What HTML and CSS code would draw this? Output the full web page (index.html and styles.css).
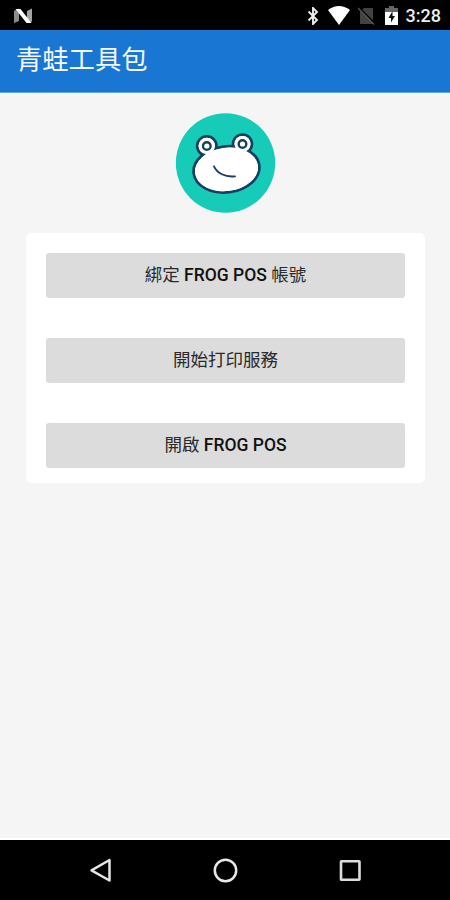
FILE: index.html
```html
<!DOCTYPE html>
<html lang="zh-Hant">
<head>
  <meta charset="UTF-8" />
  <meta name="viewport" content="width=device-width, initial-scale=1.0"/>
  <title>青蛙工具包</title>
  <link rel="stylesheet" href="styles.css">
</head>
<body>

  <!-- Status bar -->
  <div class="status-bar">
    <svg class="icon-n" width="20" height="18" viewBox="0 0 20 18">
      <path d="M1 4 L6 1.5 V14 L1 16Z" fill="#8c8c8c"/>
      <path d="M14 4 L19 1.5 V14.5 L14 16Z" fill="#a4a4a4"/>
      <path d="M2.5 2 H7.5 L18.5 16 H13.5Z" fill="#fff"/>
    </svg>
    <div class="status-icons">
      <svg class="icon-bt" width="12" height="18" viewBox="0 0 12 18">
        <path d="M1.5 4.5 L10 13 L6 17 V1 L10 5 L1.5 13.5" fill="none" stroke="#eee" stroke-width="1.9"/>
      </svg>
      <svg class="icon-wifi" width="22" height="19" viewBox="0 0 22 19">
        <path d="M0 4 Q11 -4 22 4 L11 19Z" fill="#fff"/>
      </svg>
      <svg class="icon-sim" width="17" height="18" viewBox="0 0 17 18">
        <path d="M6 1 H15 V17 H2 V5Z" fill="#424242"/>
        <path d="M1 .5 L17 16.5" stroke="#000" stroke-width="1.6"/>
        <path d="M0 1 L16 17.5" stroke="#555" stroke-width="1.4"/>
      </svg>
      <svg class="icon-battery" width="14" height="20" viewBox="0 0 14 20">
        <path d="M4 0 H9 V2 H13 V7 H0 V2 H4Z" fill="#666"/>
        <path d="M0 6 H13 V19 H0Z" fill="#fff"/>
        <path d="M7.5 5 L3.5 12 H6 V16.5 L10 10 H7.5Z" fill="#111"/>
      </svg>
      <span class="clock">3:28</span>
    </div>
  </div>

  <header class="app-bar">
    <h1>青蛙工具包</h1>
  </header>

  <main class="content">
    <svg class="logo" width="100" height="100" viewBox="0 0 100 100">
      <circle cx="49.5" cy="50" r="49.7" fill="#16cbb8"/>
      <!-- outline -->
      <g fill="#fff" stroke="#163f63" stroke-width="2.8">
        <circle cx="30.8" cy="33" r="9.6"/>
        <circle cx="66.5" cy="31" r="9.4"/>
        <ellipse cx="50.5" cy="56.4" rx="33" ry="23" transform="rotate(-7 50.5 56.4)"/>
      </g>
      <!-- ears cover the head line where they overlap -->
      <circle cx="30.8" cy="33" r="8.2" fill="#fff"/>
      <circle cx="66.5" cy="31" r="8" fill="#fff"/>
      <ellipse cx="50.5" cy="56.4" rx="31.6" ry="21.6" transform="rotate(-7 50.5 56.4)" fill="#fff"/>
      <g fill="#fff" stroke="#163f63" stroke-width="2.4">
        <circle cx="30.8" cy="33" r="3.8"/>
        <circle cx="66.5" cy="31" r="3.8"/>
        <path d="M38 53.3 C41 60 49 64.5 59 63.3" fill="none" stroke-width="1.8" stroke-linecap="round"/>
      </g>
    </svg>

    <div class="card">
      <button><span>綁定</span> FROG POS <span>帳號</span></button>
      <button><span>開始打印服務</span></button>
      <button><span>開啟</span> FROG POS</button>
    </div>
  </main>

  <!-- Navigation bar -->
  <nav class="nav-bar">
    <svg width="24" height="26" viewBox="0 0 24 26">
      <path d="M20.5 3 V23.5 L2.5 13.3Z" fill="none" stroke="#e4e4e4" stroke-width="2.5" stroke-linejoin="round"/>
    </svg>
    <svg width="26" height="26" viewBox="0 0 26 26">
      <circle cx="12.5" cy="13.5" r="10.7" fill="none" stroke="#e8e8e8" stroke-width="2.5"/>
    </svg>
    <svg width="24" height="24" viewBox="0 0 24 24">
      <rect x="3" y="3.2" width="18.5" height="18.5" rx=".5" fill="none" stroke="#ddd" stroke-width="2.6"/>
    </svg>
  </nav>

</body>
</html>
```

FILE: styles.css
```css
* {
  box-sizing: border-box;
  margin: 0;
  padding: 0;
}
body {
  font-family: Roboto, "Noto Sans CJK TC", sans-serif;
  background: #f5f5f5;
  color: #111;
  display: flex;
  flex-direction: column;
  height: 100vh;
  overflow: hidden;
}
svg {
  display: block;
  flex: none;
}
.status-bar {
  display: flex;
  justify-content: space-between;
  align-items: center;
  height: 30px;
  padding: 1px 9px 0 13px;
  background: #000;
  color: #eee;
}
.status-icons {
  display: flex;
  align-items: center;
}
.icon-wifi {
  margin-left: 9px;
}
.icon-sim {
  margin-left: 8px;
}
.icon-battery {
  margin-left: 10px;
}
.clock {
  margin-left: 7px;
  font-size: 18px;
  font-weight: 500;
  line-height: 30px;
}
.app-bar {
  height: 63px;
  padding: 0 16px;
  background: #1976d2;
  border-bottom: 1px solid #6ba5e0;
  color: #f4f8ff;
}
.app-bar h1 {
  font-size: 26.3px;
  font-weight: 400;
  line-height: 60px;
}
.content {
  flex: 1;
  display: flex;
  flex-direction: column;
  align-items: center;
  padding: 20px 25px 0 26px;
  border-bottom: 2px solid #fff;
}
.card {
  display: flex;
  flex-direction: column;
  gap: 40px;
  width: 100%;
  height: 250px;
  margin-top: 20px;
  padding: 20px 20px 15px;
  background: #fff;
  border-radius: 5px;
}
button {
  flex: 1;
  padding-bottom: 5px;
  font-family: inherit;
  font-size: 17.5px;
  font-weight: 500;
  color: #111;
  background: #dcdcdc;
  border: none;
  border-radius: 3px;
}
button span {
  font-weight: 400;
  color: #2a2a2a;
}
.nav-bar {
  display: flex;
  justify-content: space-between;
  align-items: center;
  height: 60px;
  padding: 0 88px 0 89px;
  background: #000;
}
```
